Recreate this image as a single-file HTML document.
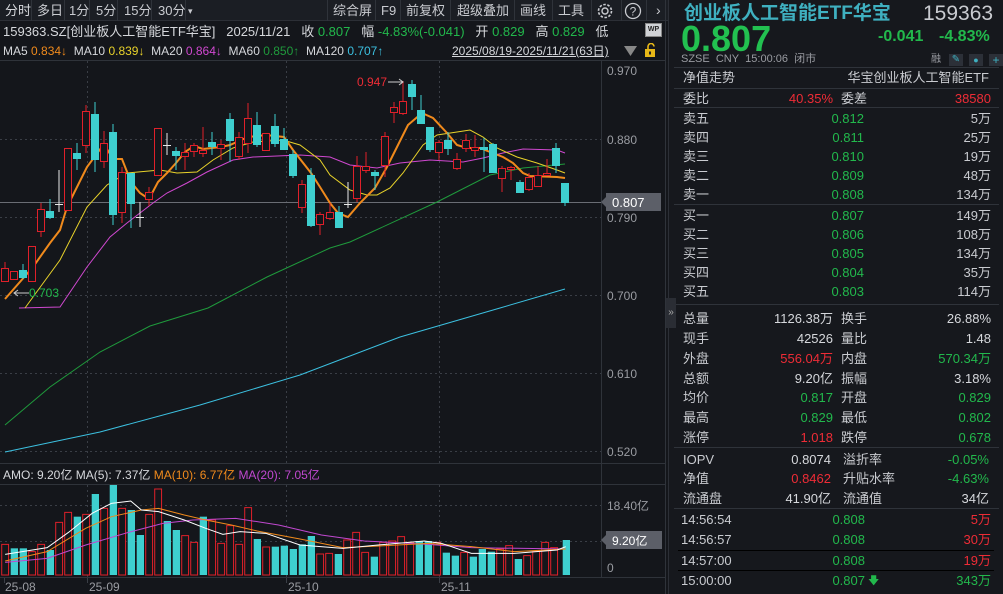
<!DOCTYPE html>
<html><head><meta charset="utf-8"><style>
*{margin:0;padding:0;box-sizing:border-box}
body{width:1003px;height:594px;background:#14161b;overflow:hidden;position:relative;font-family:"Liberation Sans","Noto Sans CJK SC",sans-serif;color:#c9cbd0;font-size:13px}
.a{position:absolute;white-space:nowrap;line-height:16px}
.g{color:#22b84c}.r{color:#ee2c36}.w{color:#d6d8dc}
.tb{position:absolute;top:0;height:21px;background:#1b1e24;border-bottom:1px solid #2c2f36}
.sep{position:absolute;top:0;width:1px;height:21px;background:#2f333a}
#rp{position:absolute;left:668px;top:0;width:335px;height:594px;background:#16181d;border-left:1px solid #2c2f36}
#rp .a{font-size:13px}
.hl{position:absolute;height:1px;background:#2f333a}
.rt{text-align:right}
</style></head><body>
<div class="tb" style="left:0;width:668px"></div>
<span class="a" style="left:5px;top:3px;color:#d6d8dc">分时</span>
<div class="sep" style="left:31px"></div>
<span class="a" style="left:37px;top:3px">多日</span>
<div class="sep" style="left:64px"></div>
<span class="a" style="left:69px;top:3px">1分</span>
<div class="sep" style="left:89px"></div>
<span class="a" style="left:96px;top:3px">5分</span>
<div class="sep" style="left:117px"></div>
<span class="a" style="left:124px;top:3px">15分</span>
<div class="sep" style="left:151px"></div>
<span class="a" style="left:158px;top:3px">30分</span>
<div class="sep" style="left:185px"></div>
<span class="a" style="left:188px;top:3px;font-size:9px">▾</span>
<div class="sep" style="left:327px"></div>
<span class="a" style="left:333px;top:3px">综合屏</span>
<div class="sep" style="left:375px"></div>
<span class="a" style="left:381px;top:3px">F9</span>
<div class="sep" style="left:400px"></div>
<span class="a" style="left:406px;top:3px">前复权</span>
<div class="sep" style="left:450px"></div>
<span class="a" style="left:457px;top:3px">超级叠加</span>
<div class="sep" style="left:514px"></div>
<span class="a" style="left:520px;top:3px">画线</span>
<div class="sep" style="left:552px"></div>
<span class="a" style="left:558px;top:3px">工具</span>
<div class="sep" style="left:591px"></div>
<svg class="a" style="left:596px;top:2px" width="18" height="18" viewBox="0 0 18 18"><circle cx="9" cy="9" r="3" fill="none" stroke="#c9cbd0" stroke-width="1.4"/><circle cx="9" cy="9" r="6.5" fill="none" stroke="#c9cbd0" stroke-width="1.6" stroke-dasharray="2.5 1.6"/></svg>
<div class="sep" style="left:621px"></div>
<svg class="a" style="left:624px;top:2px" width="18" height="18"><circle cx="9" cy="9" r="7.5" fill="none" stroke="#c9cbd0" stroke-width="1.3"/><text x="9" y="13.5" font-size="12" text-anchor="middle" fill="#c9cbd0" font-family="Liberation Sans">?</text></svg>
<div class="sep" style="left:646px"></div>
<span class="a" style="left:656px;top:2px;font-size:14px">›</span>

<div class="a" style="left:3px;top:24px;font-size:13px"><span class="w">159363.SZ[创业板人工智能ETF华宝]</span>&nbsp;&nbsp;&nbsp;<span class="w">2025/11/21</span>&nbsp;&nbsp;&nbsp;<span class="w">收</span> <span class="g">0.807</span>&nbsp;&nbsp;&nbsp;<span class="w">幅</span> <span class="g">-4.83%(-0.041)</span>&nbsp;&nbsp;&nbsp;<span class="w">开</span> <span class="g">0.829</span>&nbsp;&nbsp;&nbsp;<span class="w">高</span> <span class="g">0.829</span>&nbsp;&nbsp;&nbsp;<span class="w">低</span></div>
<div class="a" style="left:645px;top:23px;width:17px;height:14px;background:#d0d2d6;border:1px solid #888;font-size:7px;color:#222;text-align:center;line-height:12px;font-weight:bold">WP</div>
<div class="a" style="left:3px;top:43px;font-size:12px"><span class="w">MA5</span> <span style="color:#f08a1c">0.834↓</span>&nbsp; <span class="w">MA10</span> <span style="color:#e8d22a">0.839↓</span>&nbsp; <span class="w">MA20</span> <span style="color:#d048d0">0.864↓</span>&nbsp; <span class="w">MA60</span> <span style="color:#1f9a3c">0.850↑</span>&nbsp; <span class="w">MA120</span> <span style="color:#3cc0e0">0.707↑</span></div>
<div class="a" style="left:452px;top:43px;font-size:12px;color:#d6d8dc;text-decoration:underline">2025/08/19-2025/11/21(63日)</div>
<svg class="a" style="left:624px;top:45px" width="14" height="12"><polygon points="0,1 13,1 6.5,11" fill="#888"/></svg>
<svg class="a" style="left:644px;top:43px" width="14" height="14"><rect x="1" y="6" width="10" height="8" fill="#e8b818"/><path d="M4 6V3.5a3 3 0 0 1 6 0" fill="none" stroke="#e8b818" stroke-width="1.6"/><rect x="5" y="8.5" width="2" height="3" fill="#222"/></svg>

<svg class="a" style="left:0;top:0" width="668" height="594">
<g stroke="#2f333a" stroke-width="1">
<line x1="0" y1="60.5" x2="665" y2="60.5"/>
<line x1="601.5" y1="60" x2="601.5" y2="577"/>
<line x1="0" y1="463.5" x2="665" y2="463.5"/>
<line x1="0" y1="484.5" x2="665" y2="484.5"/>
<line x1="0" y1="577.5" x2="665" y2="577.5"/>
<line x1="665.5" y1="0" x2="665.5" y2="594"/>
</g>
<g stroke="#3a3e46" stroke-dasharray="2 3">
<line x1="0" y1="139.5" x2="601" y2="139.5"/><line x1="0" y1="217.5" x2="601" y2="217.5"/><line x1="0" y1="295.5" x2="601" y2="295.5"/><line x1="0" y1="373.5" x2="601" y2="373.5"/><line x1="0" y1="451.5" x2="601" y2="451.5"/>
<line x1="87.5" y1="61" x2="87.5" y2="463"/><line x1="286.5" y1="61" x2="286.5" y2="463"/><line x1="439.5" y1="61" x2="439.5" y2="463"/>
<line x1="0" y1="505.5" x2="601" y2="505.5"/><line x1="0" y1="541.5" x2="601" y2="541.5"/>
<line x1="87.5" y1="485" x2="87.5" y2="577"/><line x1="286.5" y1="485" x2="286.5" y2="577"/><line x1="439.5" y1="485" x2="439.5" y2="577"/>
</g>
<line x1="0" y1="202.5" x2="601" y2="202.5" stroke="#6a6d74"/>
<g font-size="12" fill="#9a9ca2" font-family="Liberation Sans">
<text x="607" y="75">0.970</text><text x="607" y="144">0.880</text><text x="607" y="222">0.790</text><text x="607" y="300">0.700</text><text x="607" y="378">0.610</text><text x="607" y="456">0.520</text>
<text x="607" y="510">18.40亿</text><text x="607" y="572">0</text>
</g>
<polygon points="601,202 606,197 606,193 661,193 661,211 606,211 606,207" fill="#5c5f68"/>
<text x="612" y="207" font-size="13" fill="#fff" font-family="Liberation Sans">0.807</text>
<polygon points="601,540 606,535 606,531 662,531 662,549 606,549 606,545" fill="#5c5f68"/>
<text x="612" y="545" font-size="12" fill="#fff" font-family="Liberation Sans">9.20亿</text>
<polyline fill="none" stroke="#3cc0e0" stroke-width="1" points="5,452 100,432 200,405 300,375 400,337 500,308 565,289"/>
<polyline fill="none" stroke="#1f9a3c" stroke-width="1" points="5,425 50,387 100,352 150,326 208,308 267,277 330,248 350,242 437,202 490,175 523,168 565,164"/>
<polyline fill="none" stroke="#d048d0" stroke-width="1" points="19,308 60,307 87,267 110,237 127,223 153,203 167,193 187,183 207,172 233,160 253,157 300,155 330,157 350,165 377,168 400,163 430,160 463,162 483,158 503,153 523,149 557,150 565,153"/>
<polyline fill="none" stroke="#e8d22a" stroke-width="1" points="25,308 60,260 87,207 107,185 127,173 160,170 177,173 197,172 213,160 233,148 253,142 283,140 300,145 320,160 330,175 350,190 367,195 377,195 390,188 403,173 423,145 437,135 457,132 470,130 483,137 497,148 517,157 537,163 557,170 565,173"/>
<polyline fill="none" stroke="#f08a1c" stroke-width="2" points="5,299 33,267 50,243 60,230 67,207 87,167 104,144 113,159 122,159 131,182 140,193 149,199 158,182 167,173 176,163 185,152 194,146 203,149 221,147 230,145 248,137 266,135 275,136 284,137 293,150 311,173 320,187 330,203 338,213 348,217 360,203 375,188 387,167 397,147 408,125 422,113 433,118 447,133 457,145 467,148 480,148 490,152 503,157 513,163 523,173 530,176 557,177 565,178"/>
<g stroke-width="1">
<g stroke="#e0202a" fill="#14161b">
<line x1="5" y1="262" x2="5" y2="282"/><rect x="1.5" y="268.5" width="7" height="13"/>
<rect x="10.5" y="271.5" width="7" height="8"/>
<rect x="28.5" y="246.5" width="7" height="35"/>
<line x1="41" y1="203" x2="41" y2="237"/><rect x="37.5" y="209.5" width="7" height="22"/>
<rect x="64.5" y="148.5" width="7" height="62"/>
<line x1="86" y1="105" x2="86" y2="153"/><rect x="82.5" y="111.5" width="7" height="34"/>
<line x1="104" y1="131" x2="104" y2="168"/><rect x="100.5" y="143.5" width="7" height="18"/>
<line x1="122" y1="167" x2="122" y2="223"/><rect x="118.5" y="172.5" width="7" height="40"/>
<line x1="149" y1="187" x2="149" y2="206"/><rect x="145.5" y="192.5" width="7" height="7"/>
<rect x="154.5" y="128.5" width="7" height="47"/>
<line x1="185" y1="143" x2="185" y2="170"/><rect x="181.5" y="152.5" width="7" height="4"/>
<line x1="194" y1="143" x2="194" y2="157"/><rect x="190.5" y="145.5" width="7" height="6"/>
<line x1="203" y1="127" x2="203" y2="157"/><rect x="199.5" y="150.5" width="7" height="3"/>
<line x1="221" y1="140" x2="221" y2="160"/><rect x="217.5" y="144.5" width="7" height="4"/>
<line x1="239" y1="132" x2="239" y2="160"/><rect x="235.5" y="137.5" width="7" height="19"/>
<line x1="248" y1="103" x2="248" y2="153"/><rect x="244.5" y="118.5" width="7" height="25"/>
<rect x="262.5" y="133.5" width="7" height="17"/>
<line x1="302" y1="180" x2="302" y2="213"/><rect x="298.5" y="184.5" width="7" height="23"/>
<line x1="320" y1="212" x2="320" y2="235"/><rect x="316.5" y="214.5" width="7" height="10"/>
<line x1="330" y1="203" x2="330" y2="220"/><rect x="326.5" y="212.5" width="7" height="6"/>
<line x1="357" y1="156" x2="357" y2="202"/><rect x="353.5" y="166.5" width="7" height="32"/>
<line x1="366" y1="152" x2="366" y2="173"/><rect x="362.5" y="166.5" width="7" height="4"/>
<line x1="385" y1="132" x2="385" y2="177"/><rect x="381.5" y="136.5" width="7" height="29"/>
<line x1="394" y1="102" x2="394" y2="123"/><rect x="390.5" y="107.5" width="7" height="5"/>
<line x1="403" y1="81" x2="403" y2="115"/><rect x="399.5" y="101.5" width="7" height="12"/>
<line x1="439" y1="140" x2="439" y2="160"/><rect x="435.5" y="142.5" width="7" height="10"/>
<line x1="457" y1="153" x2="457" y2="170"/><rect x="453.5" y="159.5" width="7" height="9"/>
<line x1="466" y1="134" x2="466" y2="152"/><rect x="462.5" y="140.5" width="7" height="8"/>
<line x1="475" y1="135" x2="475" y2="157"/><rect x="471.5" y="147.5" width="7" height="3"/>
<line x1="502" y1="166" x2="502" y2="192"/><rect x="498.5" y="168.5" width="7" height="10"/>
<line x1="511" y1="166" x2="511" y2="180"/><rect x="507.5" y="167.5" width="7" height="2"/>
<line x1="529" y1="173" x2="529" y2="191"/><rect x="525.5" y="177.5" width="7" height="12"/>
<line x1="538" y1="166" x2="538" y2="187"/><rect x="534.5" y="175.5" width="7" height="11"/>
<line x1="547" y1="159" x2="547" y2="176"/><rect x="543.5" y="173.5" width="7" height="2"/>
</g>
<g stroke="#3ecfcf" fill="#3ecfcf">
<line x1="23" y1="264" x2="23" y2="279"/><rect x="19.5" y="270.5" width="7" height="7"/>
<line x1="50" y1="199" x2="50" y2="219"/><rect x="46.5" y="211.5" width="7" height="6"/>
<line x1="77" y1="143" x2="77" y2="170"/><rect x="73.5" y="153.5" width="7" height="5"/>
<line x1="95" y1="102" x2="95" y2="172"/><rect x="91.5" y="114.5" width="7" height="45"/>
<line x1="113" y1="124" x2="113" y2="225"/><rect x="109.5" y="132.5" width="7" height="82"/>
<line x1="131" y1="173" x2="131" y2="228"/><rect x="127.5" y="173.5" width="7" height="30"/>
<line x1="176" y1="147" x2="176" y2="170"/><rect x="172.5" y="151.5" width="7" height="4"/>
<line x1="212" y1="132" x2="212" y2="155"/><rect x="208.5" y="142.5" width="7" height="4"/>
<line x1="230" y1="113" x2="230" y2="162"/><rect x="226.5" y="119.5" width="7" height="21"/>
<line x1="257" y1="112" x2="257" y2="147"/><rect x="253.5" y="125.5" width="7" height="19"/>
<line x1="275" y1="114" x2="275" y2="147"/><rect x="271.5" y="126.5" width="7" height="17"/>
<line x1="284" y1="128" x2="284" y2="150"/><rect x="280.5" y="139.5" width="7" height="10"/>
<line x1="293" y1="150" x2="293" y2="178"/><rect x="289.5" y="154.5" width="7" height="21"/>
<line x1="311" y1="168" x2="311" y2="227"/><rect x="307.5" y="175.5" width="7" height="50"/>
<line x1="339" y1="206" x2="339" y2="228"/><rect x="335.5" y="212.5" width="7" height="15"/>
<line x1="375" y1="170" x2="375" y2="190"/><rect x="371.5" y="172.5" width="7" height="3"/>
<line x1="412" y1="80" x2="412" y2="110"/><rect x="408.5" y="84.5" width="7" height="12"/>
<line x1="421" y1="95" x2="421" y2="123"/><rect x="417.5" y="110.5" width="7" height="13"/>
<line x1="430" y1="127" x2="430" y2="152"/><rect x="426.5" y="127.5" width="7" height="22"/>
<line x1="448" y1="132" x2="448" y2="155"/><rect x="444.5" y="140.5" width="7" height="8"/>
<line x1="484" y1="138" x2="484" y2="172"/><rect x="480.5" y="147.5" width="7" height="2"/>
<line x1="493" y1="143" x2="493" y2="173"/><rect x="489.5" y="144.5" width="7" height="28"/>
<line x1="520" y1="180" x2="520" y2="193"/><rect x="516.5" y="182.5" width="7" height="10"/>
<line x1="556" y1="143" x2="556" y2="173"/><rect x="552.5" y="148.5" width="7" height="17"/>
<line x1="565" y1="183" x2="565" y2="206"/><rect x="561.5" y="183.5" width="7" height="19"/>
</g>
<g stroke="#e8e8e8">
<line x1="59" y1="170" x2="59" y2="212"/><line x1="55" y1="204.5" x2="63" y2="204.5"/>
<line x1="140" y1="202" x2="140" y2="227"/><line x1="136" y1="217.5" x2="144" y2="217.5"/>
<line x1="167" y1="133" x2="167" y2="155"/><line x1="163" y1="145.5" x2="171" y2="145.5"/>
<line x1="348" y1="182" x2="348" y2="208"/><line x1="344" y1="204.5" x2="352" y2="204.5"/>
</g>
</g>
<text x="357" y="86" font-size="12" fill="#ee2c36" font-family="Liberation Sans">0.947</text>
<path d="M388 82H403M399 79L403 82L399 85" fill="none" stroke="#ccc"/>
<text x="29" y="297" font-size="12" fill="#22b84c" font-family="Liberation Sans">0.703</text>
<path d="M29 293H14M18 290L14 293L18 296" fill="none" stroke="#ccc"/>
<text x="3" y="479" font-size="12" font-family="Liberation Sans,Noto Sans CJK SC" fill="#d6d8dc">AMO: 9.20亿 MA(5): 7.37亿 <tspan fill="#f08a1c">MA(10): 6.77亿</tspan> <tspan fill="#c048d0">MA(20): 7.05亿</tspan></text>
<g transform="translate(0,455) scale(0.42857,0.33333)">
<g fill="#14161b" stroke="#e0202a" stroke-width="1">
<rect x="4" y="268" width="16" height="92" vector-effect="non-scaling-stroke"/>
<rect x="67" y="290" width="16" height="70" vector-effect="non-scaling-stroke"/>
<rect x="88" y="268" width="16" height="92" vector-effect="non-scaling-stroke"/>
<rect x="130" y="202" width="16" height="158" vector-effect="non-scaling-stroke"/>
<rect x="151" y="172" width="16" height="188" vector-effect="non-scaling-stroke"/>
<rect x="193" y="178" width="16" height="182" vector-effect="non-scaling-stroke"/>
<rect x="235" y="160" width="16" height="200" vector-effect="non-scaling-stroke"/>
<rect x="277" y="160" width="16" height="200" vector-effect="non-scaling-stroke"/>
<rect x="340" y="178" width="16" height="182" vector-effect="non-scaling-stroke"/>
<rect x="361" y="102" width="16" height="258" vector-effect="non-scaling-stroke"/>
<rect x="424" y="242" width="16" height="118" vector-effect="non-scaling-stroke"/>
<rect x="445" y="262" width="16" height="98" vector-effect="non-scaling-stroke"/>
<rect x="487" y="195" width="16" height="165" vector-effect="non-scaling-stroke"/>
<rect x="508" y="265" width="16" height="95" vector-effect="non-scaling-stroke"/>
<rect x="529" y="212" width="16" height="148" vector-effect="non-scaling-stroke"/>
<rect x="550" y="268" width="16" height="92" vector-effect="non-scaling-stroke"/>
<rect x="571" y="158" width="16" height="202" vector-effect="non-scaling-stroke"/>
<rect x="613" y="276" width="16" height="84" vector-effect="non-scaling-stroke"/>
<rect x="739" y="297" width="16" height="63" vector-effect="non-scaling-stroke"/>
<rect x="760" y="295" width="16" height="65" vector-effect="non-scaling-stroke"/>
<rect x="802" y="255" width="16" height="105" vector-effect="non-scaling-stroke"/>
<rect x="823" y="232" width="16" height="128" vector-effect="non-scaling-stroke"/>
<rect x="844" y="292" width="16" height="68" vector-effect="non-scaling-stroke"/>
<rect x="886" y="262" width="16" height="98" vector-effect="non-scaling-stroke"/>
<rect x="907" y="258" width="16" height="102" vector-effect="non-scaling-stroke"/>
<rect x="928" y="245" width="16" height="115" vector-effect="non-scaling-stroke"/>
<rect x="949" y="262" width="16" height="98" vector-effect="non-scaling-stroke"/>
<rect x="1012" y="262" width="16" height="98" vector-effect="non-scaling-stroke"/>
<rect x="1075" y="292" width="16" height="68" vector-effect="non-scaling-stroke"/>
<rect x="1159" y="282" width="16" height="78" vector-effect="non-scaling-stroke"/>
<rect x="1180" y="272" width="16" height="88" vector-effect="non-scaling-stroke"/>
<rect x="1222" y="302" width="16" height="58" vector-effect="non-scaling-stroke"/>
<rect x="1243" y="288" width="16" height="72" vector-effect="non-scaling-stroke"/>
<rect x="1264" y="262" width="16" height="98" vector-effect="non-scaling-stroke"/>
<rect x="1285" y="278" width="16" height="82" vector-effect="non-scaling-stroke"/>
</g>
<g fill="#3ecfcf">
<rect x="25" y="280" width="17" height="80"/>
<rect x="46" y="280" width="17" height="80"/>
<rect x="109" y="285" width="17" height="75"/>
<rect x="172" y="185" width="17" height="175"/>
<rect x="214" y="117" width="17" height="243"/>
<rect x="256" y="90" width="17" height="270"/>
<rect x="298" y="165" width="17" height="195"/>
<rect x="319" y="240" width="17" height="120"/>
<rect x="382" y="198" width="17" height="162"/>
<rect x="403" y="225" width="17" height="135"/>
<rect x="466" y="185" width="17" height="175"/>
<rect x="592" y="252" width="17" height="108"/>
<rect x="634" y="275" width="17" height="85"/>
<rect x="655" y="272" width="17" height="88"/>
<rect x="676" y="282" width="17" height="78"/>
<rect x="697" y="268" width="17" height="92"/>
<rect x="718" y="243" width="17" height="117"/>
<rect x="781" y="297" width="17" height="63"/>
<rect x="865" y="305" width="17" height="55"/>
<rect x="970" y="258" width="17" height="102"/>
<rect x="991" y="258" width="17" height="102"/>
<rect x="1033" y="293" width="17" height="67"/>
<rect x="1054" y="302" width="17" height="58"/>
<rect x="1096" y="305" width="17" height="55"/>
<rect x="1117" y="282" width="17" height="78"/>
<rect x="1138" y="290" width="17" height="70"/>
<rect x="1201" y="312" width="17" height="48"/>
<rect x="1313" y="255" width="17" height="105"/>
</g>
<polyline fill="none" stroke="#c048d0" vector-effect="non-scaling-stroke" points="12,322 110,310 200,270 300,232 380,205 450,195 550,190 650,210 750,240 850,258 1000,268 1100,278 1320,282"/>
<polyline fill="none" stroke="#f08a1c" vector-effect="non-scaling-stroke" points="12,318 110,290 200,220 260,185 330,165 370,160 430,180 480,195 540,210 600,228 700,252 800,278 900,272 1000,265 1100,275 1200,290 1320,282"/>
<polyline fill="none" stroke="#ffffff" vector-effect="non-scaling-stroke" points="12,298 110,278 160,232 215,175 260,145 305,138 330,165 370,170 430,195 480,220 520,238 560,230 620,235 700,270 800,280 900,268 990,258 1030,265 1100,295 1200,295 1300,285 1320,275"/>
</g>
<g font-size="12" fill="#9a9ca2" font-family="Liberation Sans">
<text x="5" y="591">25-08</text><text x="89" y="591">25-09</text><text x="288" y="591">25-10</text><text x="441" y="591">25-11</text>
</g>
<g stroke="#3a3e46"><line x1="4.5" y1="578" x2="4.5" y2="583"/><line x1="87.5" y1="578" x2="87.5" y2="583"/><line x1="286.5" y1="578" x2="286.5" y2="583"/><line x1="439.5" y1="578" x2="439.5" y2="583"/></g>
</svg>

<div id="rp">
<div class="a" style="left:15px;top:2px;font-size:19px;line-height:24px;color:#3fb0c0;font-weight:bold">创业板人工智能ETF华宝</div>
<div class="a" style="left:254px;top:2px;font-size:21px;line-height:24px;color:#c9cbd0">159363</div>
<div class="a g" style="left:12px;top:20px;font-size:36px;line-height:38px;font-weight:bold;color:#22c050">0.807</div>
<div class="a g" style="left:209px;top:27px;font-size:16px;line-height:20px;font-weight:bold">-0.041</div>
<div class="a g" style="left:270px;top:27px;font-size:16px;line-height:20px;font-weight:bold">-4.83%</div>
<div class="a" style="left:12px;top:53px;font-size:11px;line-height:13px;color:#9a9ca2">SZSE&nbsp;&nbsp;CNY&nbsp;&nbsp;15:00:06&nbsp;&nbsp;闭市</div>
<div class="a" style="left:262px;top:54px;font-size:10px;line-height:12px;color:#9a9ca2">融</div>
<div class="a" style="left:280px;top:54px;width:14px;height:12px;line-height:12px;background:#2c3038;color:#3fb0c0;font-size:10px;text-align:center">✎</div>
<div class="a" style="left:300px;top:54px;width:14px;height:12px;line-height:12px;background:#2c3038;color:#3fb0c0;font-size:9px;text-align:center">●</div>
<div class="a" style="left:320px;top:54px;width:14px;height:12px;background:#2c3038;color:#3fb0c0;font-size:12px;line-height:12px;text-align:center">+</div>
<div class="hl" style="left:5px;top:67px;width:325px"></div>
<div class="a" style="left:14px;top:70px">净值走势</div>
<div class="a rt" style="right:14px;top:70px">华宝创业板人工智能ETF</div>
<div class="hl" style="left:5px;top:88px;width:325px"></div>
<div class="a" style="left:14px;top:91px">委比</div>
<div class="a r rt" style="right:170px;top:91px">40.35%</div>
<div class="a" style="left:172px;top:91px">委差</div>
<div class="a r rt" style="right:12px;top:91px">38580</div>
<div class="hl" style="left:5px;top:107px;width:325px"></div>

<div class="a" style="left:14px;top:111px">卖五</div><div class="a g rt" style="right:139px;top:111px">0.812</div><div class="a rt" style="right:12px;top:111px">5万</div>
<div class="a" style="left:14px;top:130px">卖四</div><div class="a g rt" style="right:139px;top:130px">0.811</div><div class="a rt" style="right:12px;top:130px">25万</div>
<div class="a" style="left:14px;top:149px">卖三</div><div class="a g rt" style="right:139px;top:149px">0.810</div><div class="a rt" style="right:12px;top:149px">19万</div>
<div class="a" style="left:14px;top:168px">卖二</div><div class="a g rt" style="right:139px;top:168px">0.809</div><div class="a rt" style="right:12px;top:168px">48万</div>
<div class="a" style="left:14px;top:187px">卖一</div><div class="a g rt" style="right:139px;top:187px">0.808</div><div class="a rt" style="right:12px;top:187px">134万</div>
<div class="hl" style="left:5px;top:204px;width:325px"></div>
<div class="a" style="left:14px;top:208px">买一</div><div class="a g rt" style="right:139px;top:208px">0.807</div><div class="a rt" style="right:12px;top:208px">149万</div>
<div class="a" style="left:14px;top:227px">买二</div><div class="a g rt" style="right:139px;top:227px">0.806</div><div class="a rt" style="right:12px;top:227px">108万</div>
<div class="a" style="left:14px;top:246px">买三</div><div class="a g rt" style="right:139px;top:246px">0.805</div><div class="a rt" style="right:12px;top:246px">134万</div>
<div class="a" style="left:14px;top:265px">买四</div><div class="a g rt" style="right:139px;top:265px">0.804</div><div class="a rt" style="right:12px;top:265px">35万</div>
<div class="a" style="left:14px;top:284px">买五</div><div class="a g rt" style="right:139px;top:284px">0.803</div><div class="a rt" style="right:12px;top:284px">114万</div>
<div class="hl" style="left:5px;top:304px;width:325px"></div>

<div class="a" style="left:14px;top:311px">总量</div><div class="a w rt" style="right:170px;top:311px">1126.38万</div><div class="a" style="left:172px;top:311px">换手</div><div class="a w rt" style="right:12px;top:311px">26.88%</div>
<div class="a" style="left:14px;top:331px">现手</div><div class="a w rt" style="right:170px;top:331px">42526</div><div class="a" style="left:172px;top:331px">量比</div><div class="a w rt" style="right:12px;top:331px">1.48</div>
<div class="a" style="left:14px;top:351px">外盘</div><div class="a r rt" style="right:170px;top:351px">556.04万</div><div class="a" style="left:172px;top:351px">内盘</div><div class="a g rt" style="right:12px;top:351px">570.34万</div>
<div class="a" style="left:14px;top:371px">总额</div><div class="a w rt" style="right:170px;top:371px">9.20亿</div><div class="a" style="left:172px;top:371px">振幅</div><div class="a w rt" style="right:12px;top:371px">3.18%</div>
<div class="a" style="left:14px;top:390px">均价</div><div class="a g rt" style="right:170px;top:390px">0.817</div><div class="a" style="left:172px;top:390px">开盘</div><div class="a g rt" style="right:12px;top:390px">0.829</div>
<div class="a" style="left:14px;top:410px">最高</div><div class="a g rt" style="right:170px;top:410px">0.829</div><div class="a" style="left:172px;top:410px">最低</div><div class="a g rt" style="right:12px;top:410px">0.802</div>
<div class="a" style="left:14px;top:430px">涨停</div><div class="a r rt" style="right:170px;top:430px">1.018</div><div class="a" style="left:172px;top:430px">跌停</div><div class="a g rt" style="right:12px;top:430px">0.678</div>
<div class="hl" style="left:5px;top:447px;width:325px"></div>
<div class="a" style="left:14px;top:452px">IOPV</div><div class="a w rt" style="right:172px;top:452px">0.8074</div><div class="a" style="left:174px;top:452px">溢折率</div><div class="a g rt" style="right:14px;top:452px">-0.05%</div>
<div class="a" style="left:14px;top:471px">净值</div><div class="a r rt" style="right:172px;top:471px">0.8462</div><div class="a" style="left:174px;top:471px">升贴水率</div><div class="a g rt" style="right:14px;top:471px">-4.63%</div>
<div class="a" style="left:14px;top:491px">流通盘</div><div class="a w rt" style="right:172px;top:491px">41.90亿</div><div class="a" style="left:174px;top:491px">流通值</div><div class="a w rt" style="right:14px;top:491px">34亿</div>
<div class="hl" style="left:5px;top:508px;width:325px"></div>
<div class="a" style="left:12px;top:512px">14:56:54</div><div class="a g rt" style="right:138px;top:512px">0.808</div><div class="a r rt" style="right:12px;top:512px">5万</div>
<div class="a" style="left:12px;top:532px">14:56:57</div><div class="a g rt" style="right:138px;top:532px">0.808</div><div class="a r rt" style="right:12px;top:532px">30万</div>
<div class="hl" style="left:9px;top:550px;width:316px;background:#000"></div>
<div class="a" style="left:12px;top:553px">14:57:00</div><div class="a g rt" style="right:138px;top:553px">0.808</div><div class="a r rt" style="right:12px;top:553px">19万</div>
<div class="hl" style="left:9px;top:570px;width:316px;background:#000"></div>
<div class="a" style="left:12px;top:573px">15:00:00</div><div class="a g rt" style="right:138px;top:573px">0.807</div><div class="a g" style="left:199px;top:573px;font-size:11px">🡇</div><div class="a g rt" style="right:12px;top:573px">343万</div>
</div>
<div class="a" style="left:666px;top:298px;width:10px;height:30px;background:#2a2d34;color:#aaa;font-size:10px;line-height:30px;text-align:center">»</div>
</body></html>
